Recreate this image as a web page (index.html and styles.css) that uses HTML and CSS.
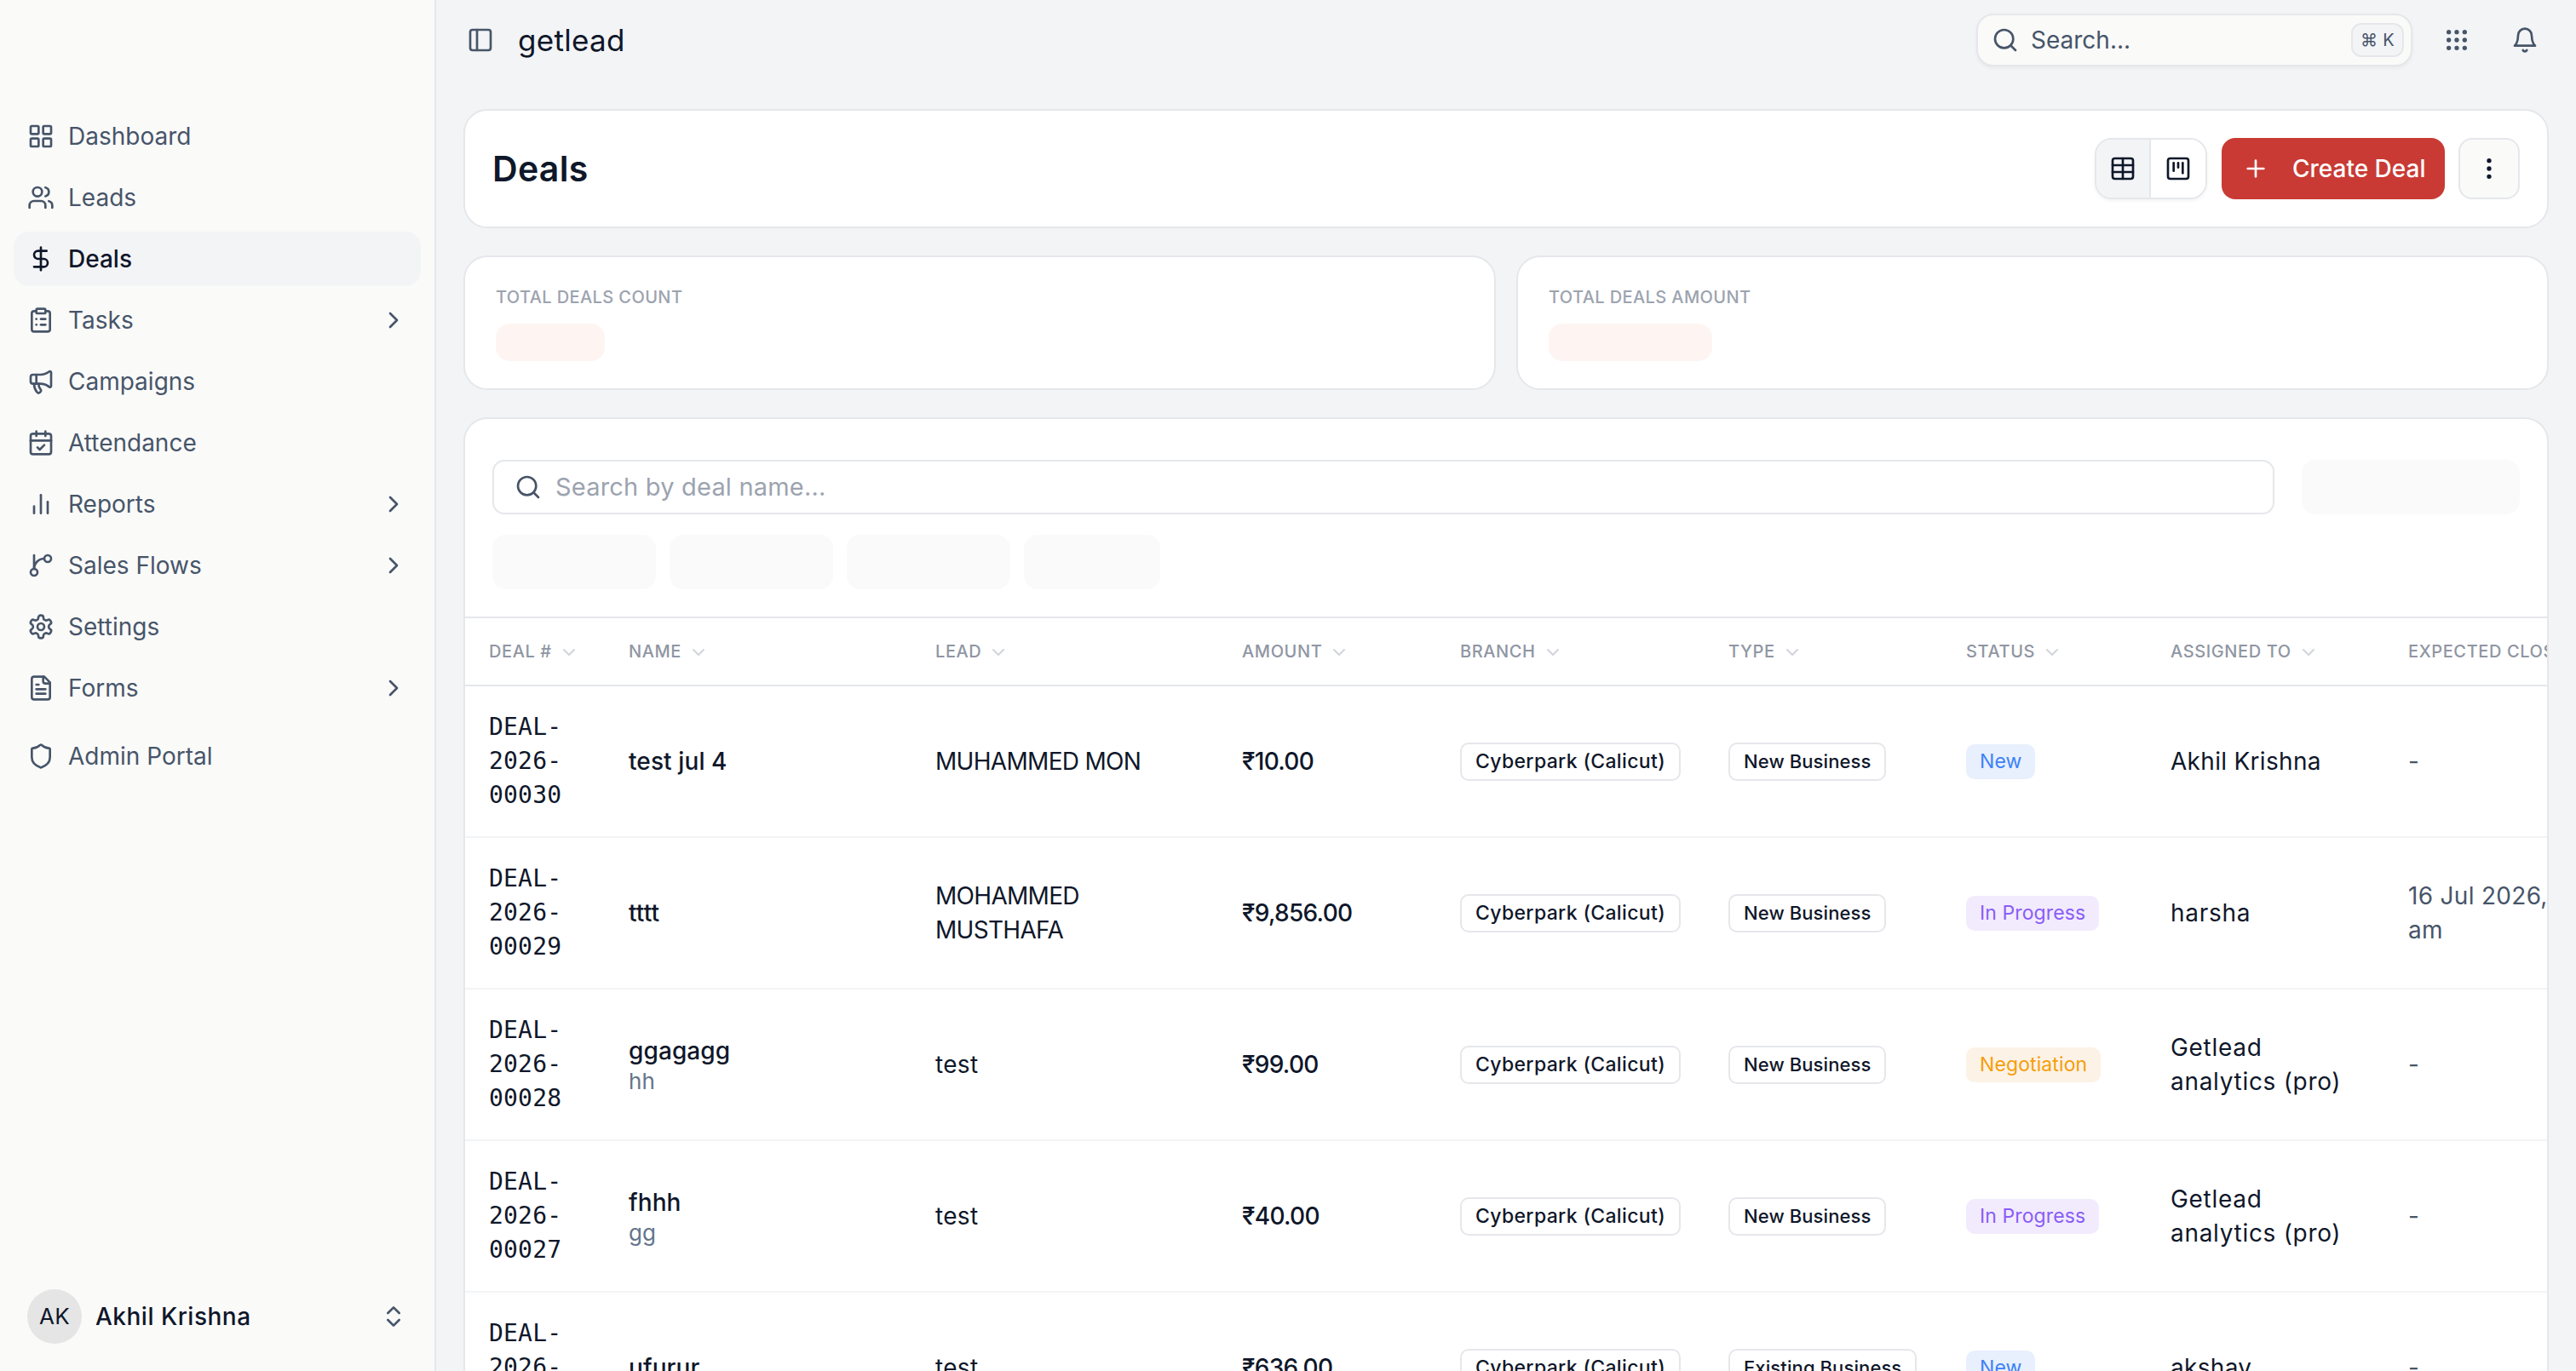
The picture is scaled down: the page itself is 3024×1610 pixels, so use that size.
FILE: index.html
```html
<!DOCTYPE html>
<html lang="en">
<head>
    <meta charset="UTF-8">
    <meta name="viewport" content="width=device-width, initial-scale=1.0">
    <title>Deals - getlead</title>
    <link rel="stylesheet" href="styles.css">
</head>
<body>
    <!-- icon sprite -->
    <svg class="sprite" xmlns="http://www.w3.org/2000/svg">
        <symbol id="i-grid" viewBox="0 0 24 24"><rect width="7" height="7" x="3" y="3" rx="1"/><rect width="7" height="7" x="14" y="3" rx="1"/><rect width="7" height="7" x="14" y="14" rx="1"/><rect width="7" height="7" x="3" y="14" rx="1"/></symbol>
        <symbol id="i-users" viewBox="0 0 24 24"><path d="M16 21v-2a4 4 0 0 0-4-4H6a4 4 0 0 0-4 4v2"/><circle cx="9" cy="7" r="4"/><path d="M22 21v-2a4 4 0 0 0-3-3.87"/><path d="M16 3.13a4 4 0 0 1 0 7.75"/></symbol>
        <symbol id="i-dollar" viewBox="0 0 24 24"><path d="M12 2v20"/><path d="M17 5H9.5a3.5 3.5 0 0 0 0 7h5a3.5 3.5 0 0 1 0 7H6"/></symbol>
        <symbol id="i-clipboard" viewBox="0 0 24 24"><rect width="8" height="4" x="8" y="2" rx="1"/><path d="M16 4h2a2 2 0 0 1 2 2v14a2 2 0 0 1-2 2H6a2 2 0 0 1-2-2V6a2 2 0 0 1 2-2h2"/><path d="M12 11h4"/><path d="M12 16h4"/><path d="M8 11h.01"/><path d="M8 16h.01"/></symbol>
        <symbol id="i-megaphone" viewBox="0 0 24 24"><path d="M11 6a13 13 0 0 0 8.4-2.8A1 1 0 0 1 21 4v12a1 1 0 0 1-1.6.8A13 13 0 0 0 11 14H5a2 2 0 0 1-2-2V8a2 2 0 0 1 2-2z"/><path d="M6 14a12 12 0 0 0 2.4 7.2 2 2 0 0 0 3.2-2.4A8 8 0 0 1 10 14"/><path d="M8 6v8"/></symbol>
        <symbol id="i-calendar" viewBox="0 0 24 24"><path d="M8 2v4"/><path d="M16 2v4"/><rect width="18" height="18" x="3" y="4" rx="2"/><path d="M3 10h18"/><path d="m9 16 2 2 4-4"/></symbol>
        <symbol id="i-bars" viewBox="0 0 24 24"><path d="M18 20V10"/><path d="M12 20V4"/><path d="M6 20v-6"/></symbol>
        <symbol id="i-branch" viewBox="0 0 24 24"><path d="M6 3v12"/><circle cx="18" cy="6" r="3"/><circle cx="6" cy="18" r="3"/><path d="M15 6a9 9 0 0 0-9 9"/></symbol>
        <symbol id="i-settings" viewBox="0 0 24 24"><path d="M12.22 2h-.44a2 2 0 0 0-2 2v.18a2 2 0 0 1-1 1.73l-.43.25a2 2 0 0 1-2 0l-.15-.08a2 2 0 0 0-2.73.73l-.22.38a2 2 0 0 0 .73 2.73l.15.1a2 2 0 0 1 1 1.72v.51a2 2 0 0 1-1 1.74l-.15.09a2 2 0 0 0-.73 2.73l.22.38a2 2 0 0 0 2.73.73l.15-.08a2 2 0 0 1 2 0l.43.25a2 2 0 0 1 1 1.73V20a2 2 0 0 0 2 2h.44a2 2 0 0 0 2-2v-.18a2 2 0 0 1 1-1.73l.43-.25a2 2 0 0 1 2 0l.15.08a2 2 0 0 0 2.73-.73l.22-.39a2 2 0 0 0-.73-2.73l-.15-.08a2 2 0 0 1-1-1.74v-.5a2 2 0 0 1 1-1.74l.15-.09a2 2 0 0 0 .73-2.73l-.22-.38a2 2 0 0 0-2.73-.73l-.15.08a2 2 0 0 1-2 0l-.43-.25a2 2 0 0 1-1-1.73V4a2 2 0 0 0-2-2z"/><circle cx="12" cy="12" r="3"/></symbol>
        <symbol id="i-file" viewBox="0 0 24 24"><path d="M15 2H6a2 2 0 0 0-2 2v16a2 2 0 0 0 2 2h12a2 2 0 0 0 2-2V7Z"/><path d="M14 2v4a2 2 0 0 0 2 2h4"/><path d="M10 9H8"/><path d="M16 13H8"/><path d="M16 17H8"/></symbol>
        <symbol id="i-shield" viewBox="0 0 24 24"><path d="M20 13c0 5-3.5 7.5-7.66 8.95a1 1 0 0 1-.67-.01C7.5 20.5 4 18 4 13V6a1 1 0 0 1 1-1c2 0 4.5-1.2 6.24-2.72a1.17 1.17 0 0 1 1.52 0C14.51 3.81 17 5 19 5a1 1 0 0 1 1 1z"/></symbol>
        <symbol id="i-right" viewBox="0 0 24 24"><path d="m9 18 6-6-6-6"/></symbol>
        <symbol id="i-down" viewBox="0 0 24 24"><path d="m6 9 6 6 6-6"/></symbol>
        <symbol id="i-updown" viewBox="0 0 24 24"><path d="m7 15 5 5 5-5"/><path d="m7 9 5-5 5 5"/></symbol>
        <symbol id="i-panel" viewBox="0 0 24 24"><rect width="18" height="18" x="3" y="3" rx="2"/><path d="M9 3v18"/></symbol>
        <symbol id="i-search" viewBox="0 0 24 24"><circle cx="11" cy="11" r="8"/><path d="m21 21-4.3-4.3"/></symbol>
        <symbol id="i-bell" viewBox="0 0 24 24"><path d="M6 8a6 6 0 0 1 12 0c0 7 3 9 3 9H3s3-2 3-9"/><path d="M10.3 21a1.94 1.94 0 0 0 3.4 0"/></symbol>
        <symbol id="i-apps" viewBox="0 0 24 24"><circle cx="12" cy="5" r="1"/><circle cx="19" cy="5" r="1"/><circle cx="5" cy="5" r="1"/><circle cx="12" cy="12" r="1"/><circle cx="19" cy="12" r="1"/><circle cx="5" cy="12" r="1"/><circle cx="12" cy="19" r="1"/><circle cx="19" cy="19" r="1"/><circle cx="5" cy="19" r="1"/></symbol>
        <symbol id="i-table" viewBox="0 0 24 24"><path d="M12 3v18"/><rect width="18" height="18" x="3" y="3" rx="2"/><path d="M3 9h18"/><path d="M3 15h18"/></symbol>
        <symbol id="i-kanban" viewBox="0 0 24 24"><rect width="18" height="18" x="3" y="3" rx="2"/><path d="M8 7v7"/><path d="M12 7v4"/><path d="M16 7v9"/></symbol>
        <symbol id="i-plus" viewBox="0 0 24 24"><path d="M5 12h14"/><path d="M12 5v14"/></symbol>
        <symbol id="i-more" viewBox="0 0 24 24"><circle cx="12" cy="12" r="1"/><circle cx="12" cy="5" r="1"/><circle cx="12" cy="19" r="1"/></symbol>
    </svg>

    <div class="app">
        <aside class="sidebar">
            <nav class="side-nav">
                <a class="nav-item" href="#"><svg class="icon"><use href="#i-grid"/></svg><span>Dashboard</span></a>
                <a class="nav-item" href="#"><svg class="icon"><use href="#i-users"/></svg><span>Leads</span></a>
                <a class="nav-item active" href="#"><svg class="icon"><use href="#i-dollar"/></svg><span>Deals</span></a>
                <a class="nav-item" href="#"><svg class="icon"><use href="#i-clipboard"/></svg><span>Tasks</span><svg class="icon nav-arrow"><use href="#i-right"/></svg></a>
                <a class="nav-item" href="#"><svg class="icon"><use href="#i-megaphone"/></svg><span>Campaigns</span></a>
                <a class="nav-item" href="#"><svg class="icon"><use href="#i-calendar"/></svg><span>Attendance</span></a>
                <a class="nav-item" href="#"><svg class="icon"><use href="#i-bars"/></svg><span>Reports</span><svg class="icon nav-arrow"><use href="#i-right"/></svg></a>
                <a class="nav-item" href="#"><svg class="icon"><use href="#i-branch"/></svg><span>Sales Flows</span><svg class="icon nav-arrow"><use href="#i-right"/></svg></a>
                <a class="nav-item" href="#"><svg class="icon"><use href="#i-settings"/></svg><span>Settings</span></a>
                <a class="nav-item" href="#"><svg class="icon"><use href="#i-file"/></svg><span>Forms</span><svg class="icon nav-arrow"><use href="#i-right"/></svg></a>
                <a class="nav-item nav-admin" href="#"><svg class="icon"><use href="#i-shield"/></svg><span>Admin Portal</span></a>
            </nav>
            <div class="user-box">
                <div class="avatar">AK</div>
                <div class="user-name">Akhil Krishna</div>
                <svg class="icon user-arrow"><use href="#i-updown"/></svg>
            </div>
        </aside>

        <div class="main">
            <header class="topbar">
                <svg class="icon"><use href="#i-panel"/></svg>
                <div class="brand">getlead</div>
                <div class="global-search">
                    <svg class="icon"><use href="#i-search"/></svg>
                    <span class="global-search-text">Search...</span>
                    <kbd class="kbd">⌘ K</kbd>
                </div>
                <svg class="icon top-icon"><use href="#i-apps"/></svg>
                <svg class="icon top-icon"><use href="#i-bell"/></svg>
            </header>

            <main class="content">
                <section class="card title-card">
                    <h1>Deals</h1>
                    <div class="view-toggle">
                        <button class="view-btn selected"><svg class="icon dark"><use href="#i-table"/></svg></button>
                        <button class="view-btn"><svg class="icon dark"><use href="#i-kanban"/></svg></button>
                    </div>
                    <button class="btn-create"><svg class="icon white"><use href="#i-plus"/></svg><span>Create Deal</span></button>
                    <button class="btn-more"><svg class="icon dark"><use href="#i-more"/></svg></button>
                </section>

                <section class="stats">
                    <div class="card stat-card">
                        <div class="stat-label">TOTAL DEALS COUNT</div>
                        <div class="stat-skel skel-count"></div>
                    </div>
                    <div class="card stat-card">
                        <div class="stat-label">TOTAL DEALS AMOUNT</div>
                        <div class="stat-skel skel-amount"></div>
                    </div>
                </section>

                <section class="card table-card">
                    <div class="filters">
                        <div class="filter-top">
                            <div class="deal-search">
                                <svg class="icon"><use href="#i-search"/></svg>
                                <span>Search by deal name...</span>
                            </div>
                            <div class="skel skel-action"></div>
                        </div>
                        <div class="filter-pills">
                            <div class="skel skel-pill"></div>
                            <div class="skel skel-pill"></div>
                            <div class="skel skel-pill"></div>
                            <div class="skel skel-pill small"></div>
                        </div>
                    </div>

                    <table class="deals-table">
                        <colgroup>
                            <col class="col-num"><col class="col-name"><col class="col-lead"><col class="col-amount"><col class="col-branch"><col class="col-type"><col class="col-status"><col class="col-assigned"><col class="col-close">
                        </colgroup>
                        <thead>
                            <tr>
                                <th>DEAL #<svg class="icon sort"><use href="#i-down"/></svg></th>
                                <th>NAME<svg class="icon sort"><use href="#i-down"/></svg></th>
                                <th>LEAD<svg class="icon sort"><use href="#i-down"/></svg></th>
                                <th>AMOUNT<svg class="icon sort"><use href="#i-down"/></svg></th>
                                <th>BRANCH<svg class="icon sort"><use href="#i-down"/></svg></th>
                                <th>TYPE<svg class="icon sort"><use href="#i-down"/></svg></th>
                                <th>STATUS<svg class="icon sort"><use href="#i-down"/></svg></th>
                                <th>ASSIGNED TO<svg class="icon sort"><use href="#i-down"/></svg></th>
                                <th>EXPECTED CLOSE</th>
                            </tr>
                        </thead>
                        <tbody>
                            <tr>
                                <td class="deal-no">DEAL-2026-00030</td>
                                <td class="deal-name">test jul 4</td>
                                <td class="caps">MUHAMMED MON</td>
                                <td class="amount">₹10.00</td>
                                <td><span class="tag branch">Cyberpark (Calicut)</span></td>
                                <td><span class="tag">New Business</span></td>
                                <td><span class="status st-new">New</span></td>
                                <td>Akhil Krishna</td>
                                <td class="close-date">-</td>
                            </tr>
                            <tr>
                                <td class="deal-no">DEAL-2026-00029</td>
                                <td class="deal-name">tttt</td>
                                <td class="caps">MOHAMMED MUSTHAFA</td>
                                <td class="amount">₹9,856.00</td>
                                <td><span class="tag branch">Cyberpark (Calicut)</span></td>
                                <td><span class="tag">New Business</span></td>
                                <td><span class="status st-progress">In Progress</span></td>
                                <td class="wide">harsha</td>
                                <td class="close-date">16 Jul 2026, 11:00 am</td>
                            </tr>
                            <tr>
                                <td class="deal-no">DEAL-2026-00028</td>
                                <td class="deal-name">ggagagg<small>hh</small></td>
                                <td>test</td>
                                <td class="amount">₹99.00</td>
                                <td><span class="tag branch">Cyberpark (Calicut)</span></td>
                                <td><span class="tag">New Business</span></td>
                                <td><span class="status st-nego">Negotiation</span></td>
                                <td class="wide">Getlead analytics (pro)</td>
                                <td class="close-date">-</td>
                            </tr>
                            <tr>
                                <td class="deal-no">DEAL-2026-00027</td>
                                <td class="deal-name">fhhh<small>gg</small></td>
                                <td>test</td>
                                <td class="amount">₹40.00</td>
                                <td><span class="tag branch">Cyberpark (Calicut)</span></td>
                                <td><span class="tag">New Business</span></td>
                                <td><span class="status st-progress">In Progress</span></td>
                                <td class="wide">Getlead analytics (pro)</td>
                                <td class="close-date">-</td>
                            </tr>
                            <tr>
                                <td class="deal-no">DEAL-2026-00026</td>
                                <td class="deal-name">ufurur</td>
                                <td>test</td>
                                <td class="amount">₹636.00</td>
                                <td><span class="tag branch">Cyberpark (Calicut)</span></td>
                                <td><span class="tag">Existing Business</span></td>
                                <td><span class="status st-new">New</span></td>
                                <td>akshay</td>
                                <td class="close-date">-</td>
                            </tr>
                        </tbody>
                    </table>
                </section>
            </main>
        </div>
    </div>
</body>
</html>
```

FILE: styles.css
```css
* {
    box-sizing: border-box;
}

html, body {
    height: 100%;
}

body {
    margin: 0;
    overflow: hidden;
    font-family: Inter, "DejaVu Sans", sans-serif;
    font-size: 28px;
    line-height: 40px;
    letter-spacing: 0.3px;
    color: #0f172a;
    background-color: #f3f4f6;
}

.sprite {
    display: none;
}

.icon {
    width: 32px;
    height: 32px;
    flex-shrink: 0;
    fill: none;
    stroke: #475569;
    stroke-width: 2;
    stroke-linecap: round;
    stroke-linejoin: round;
}

.icon.dark {
    stroke: #0f172a;
}

.icon.white {
    stroke: #fff;
}

.app {
    display: flex;
    height: 100vh;
}

/* sidebar */
.sidebar {
    width: 512px;
    flex-shrink: 0;
    display: flex;
    flex-direction: column;
    justify-content: space-between;
    padding: 128px 16px 32px;
    background-color: #fafaf9;
    border-right: 2px solid #e5e7eb;
}

.side-nav {
    display: flex;
    flex-direction: column;
    gap: 8px;
}

.nav-item {
    display: flex;
    align-items: center;
    gap: 16px;
    height: 64px;
    padding: 0 16px;
    border-radius: 18px;
    color: #475569;
    text-decoration: none;
    letter-spacing: 0;
}

.nav-item.active {
    background-color: #f3f4f6;
    color: #0f172a;
    font-weight: 500;
}

.nav-item.active .icon {
    stroke: #0f172a;
}

.nav-arrow {
    margin-left: auto;
}

.nav-admin {
    margin-top: 8px;
}

.user-box {
    display: flex;
    align-items: center;
    gap: 16px;
    padding: 0 16px;
}

.avatar {
    width: 64px;
    height: 64px;
    border-radius: 50%;
    display: flex;
    align-items: center;
    justify-content: center;
    background-color: #e5e5e5;
    font-size: 26px;
}

.user-name {
    font-weight: 500;
    letter-spacing: 0.5px;
}

.user-arrow {
    margin-left: auto;
}

/* top bar */
.main {
    flex-grow: 1;
    min-width: 0;
    display: flex;
    flex-direction: column;
}

.topbar {
    height: 94px;
    flex-shrink: 0;
    display: flex;
    align-items: center;
    padding: 0 44px 0 36px;
}

.brand {
    margin-left: 28px;
    font-size: 35px;
}

.global-search {
    width: 512px;
    height: 62px;
    margin-left: auto;
    margin-right: 36px;
    padding: 0 8px 0 16px;
    display: flex;
    align-items: center;
    gap: 14px;
    background-color: #fafaf9;
    border: 2px solid #e5e7eb;
    border-radius: 20px;
    box-shadow: 0 2px 4px rgba(0, 0, 0, 0.05);
}

.global-search-text {
    color: #475569;
    letter-spacing: 0;
}

.kbd {
    margin-left: auto;
    width: 62px;
    height: 40px;
    display: flex;
    align-items: center;
    justify-content: center;
    font-family: Inter, "DejaVu Sans", sans-serif;
    font-size: 20px;
    color: #475569;
    background-color: #f3f4f6;
    border: 2px solid #e5e7eb;
    border-radius: 12px;
}

.top-icon + .top-icon {
    margin-left: 48px;
}

/* content */
.content {
    flex-grow: 1;
    min-height: 0;
    display: flex;
    flex-direction: column;
    gap: 32px;
    padding: 34px 32px 0;
}

.card {
    background-color: #fff;
    border: 2px solid #e5e7eb;
    border-radius: 28px;
}

.title-card {
    display: flex;
    align-items: center;
    padding: 32px;
}

.title-card h1 {
    margin: 0 auto 0 0;
    font-size: 41px;
    line-height: 56px;
    font-weight: 600;
}

.view-toggle {
    display: flex;
    height: 72px;
    border: 2px solid #e5e7eb;
    border-radius: 20px;
    overflow: hidden;
    box-shadow: 0 2px 4px rgba(0, 0, 0, 0.05);
}

.view-btn {
    width: 64px;
    padding: 0;
    display: flex;
    align-items: center;
    justify-content: center;
    border: none;
    background-color: #fff;
}

.view-btn.selected {
    background-color: #f3f4f6;
    border-right: 2px solid #e5e7eb;
}

.btn-create {
    height: 72px;
    width: 262px;
    margin-left: 17px;
    padding: 0 0 0 24px;
    display: flex;
    align-items: center;
    gap: 27px;
    border: none;
    border-radius: 16px;
    background-color: #c93a34;
    color: #fff;
    font: inherit;
    font-weight: 500;
}

.btn-more {
    width: 72px;
    height: 72px;
    margin-left: 16px;
    padding: 0;
    display: flex;
    align-items: center;
    justify-content: center;
    background-color: #fafaf9;
    border: 2px solid #e5e7eb;
    border-radius: 16px;
}

.stats {
    display: grid;
    grid-template-columns: 1fr 1fr;
    gap: 24px;
}

.stat-card {
    padding: 33px 36px 32px;
}

.stat-label {
    font-size: 20px;
    line-height: 28px;
    font-weight: 500;
    letter-spacing: 0.4px;
    color: #9ca3af;
}

.stat-skel {
    height: 44px;
    margin-top: 17px;
    border-radius: 16px;
    background-color: #fef5f3;
}

.skel-count {
    width: 128px;
}

.skel-amount {
    width: 192px;
}

/* table card */
.table-card {
    flex-grow: 1;
    min-height: 0;
    overflow: hidden;
    border-bottom: none;
    border-radius: 28px 28px 0 0;
}

.filters {
    padding: 48px 32px 32px;
}

.filter-top {
    display: flex;
    gap: 32px;
}

.deal-search {
    flex-grow: 1;
    height: 64px;
    padding: 0 24px;
    display: flex;
    align-items: center;
    gap: 16px;
    border: 2px solid #e5e7eb;
    border-radius: 14px;
    color: #9ca3af;
    font-size: 29px;
    letter-spacing: 0.2px;
}

.skel {
    height: 64px;
    border-radius: 16px;
    background-color: #fafafa;
}

.skel-action {
    width: 256px;
    flex-shrink: 0;
}

.filter-pills {
    display: flex;
    gap: 16px;
    margin-top: 24px;
}

.skel-pill {
    width: 192px;
}

.skel-pill.small {
    width: 160px;
}

.deals-table {
    table-layout: fixed;
    border-collapse: separate;
    border-spacing: 0;
    width: 2593px;
}

.col-num { width: 164px; }
.col-name { width: 360px; }
.col-lead { width: 360px; }
.col-amount { width: 256px; }
.col-branch { width: 315px; }
.col-type { width: 279px; }
.col-status { width: 240px; }
.col-assigned { width: 279px; }
.col-close { width: 340px; }

.deals-table th {
    height: 82px;
    padding: 0 28px;
    text-align: left;
    white-space: nowrap;
    font-size: 20px;
    font-weight: 500;
    letter-spacing: 0.6px;
    color: #8f96a3;
    border-top: 2px solid #e5e7eb;
    border-bottom: 2px solid #e5e7eb;
}

.sort {
    width: 24px;
    height: 24px;
    margin-left: 8px;
    vertical-align: -6px;
    stroke: #d1d5db;
}

.deals-table td {
    padding: 28px;
    vertical-align: middle;
    border-bottom: 2px solid #f3f4f6;
}

.deals-table .deal-no {
    padding-right: 0;
    font-family: "DejaVu Sans Mono", monospace;
    letter-spacing: 0.2px;
}

.deal-name {
    font-weight: 500;
    letter-spacing: 0.1px;
}

.deal-name small {
    display: block;
    font-size: 26px;
    line-height: 32px;
    font-weight: 400;
    color: #64748b;
}

.caps {
    letter-spacing: -0.7px;
}

.wide {
    letter-spacing: 0.7px;
}

.amount {
    font-weight: 500;
    letter-spacing: -0.7px;
}

.close-date {
    color: #475569;
}

.tag {
    display: inline-block;
    padding: 0 16px;
    font-size: 22px;
    line-height: 41px;
    font-weight: 500;
    letter-spacing: 0.1px;
    white-space: nowrap;
    vertical-align: middle;
    border: 2px solid #e5e7eb;
    border-radius: 10px;
}

.tag.branch {
    font-size: 23px;
    letter-spacing: 0.35px;
}

.status {
    display: inline-block;
    padding: 0 16px;
    font-size: 23px;
    line-height: 41px;
    letter-spacing: 0.1px;
    white-space: nowrap;
    vertical-align: middle;
    border-radius: 10px;
}

.st-new {
    background-color: #e8effd;
    color: #3b82f6;
}

.st-progress {
    background-color: #f1ebfd;
    color: #8b5cf6;
}

.st-nego {
    background-color: #fdf2e6;
    color: #f59e0b;
}
```
